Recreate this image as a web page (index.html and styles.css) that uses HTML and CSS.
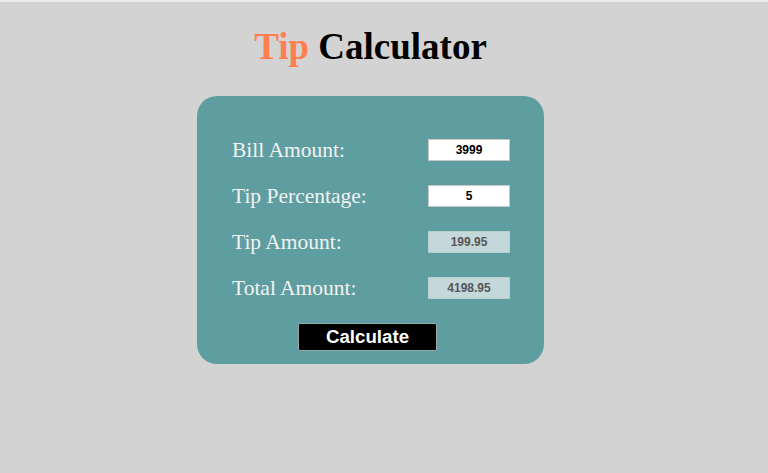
FILE: index.html
```html
<!DOCTYPE html>
<html>
<head>
<meta charset="utf-8">
<link rel="stylesheet" href="styles.css">
</head>
<body>
<div class="page">
  <h1 class="title"><span class="accent">Tip</span> Calculator</h1>
  <div class="card">
    <div class="row">
      <label class="label">Bill Amount:</label>
      <input class="field" type="text" value="3999">
    </div>
    <div class="row">
      <label class="label">Tip Percentage:</label>
      <input class="field" type="text" value="5">
    </div>
    <div class="row">
      <label class="label">Tip Amount:</label>
      <input class="field readonly" type="text" value="199.95" readonly>
    </div>
    <div class="row">
      <label class="label">Total Amount:</label>
      <input class="field readonly" type="text" value="4198.95" readonly>
    </div>
    <div class="actions">
      <button class="btn">Calculate</button>
    </div>
  </div>
</div>
</body>
</html>
```
FILE: styles.css
```css
html, body {
  margin: 0;
  padding: 0;
  height: 100%;
}
body {
  background: #d3d3d3;
  border-top: 2px solid #ebebeb;
  box-sizing: border-box;
  font-family: "Liberation Serif", serif;
}
.page {
  display: flex;
  flex-direction: column;
  align-items: center;
  padding-right: 27px;
}
.title {
  margin: 25px 0 29px 0;
  font-size: 37px;
  line-height: 40px;
  font-weight: bold;
  color: #000;
}
.accent {
  color: #ff7f50;
}
.card {
  width: 347px;
  box-sizing: border-box;
  background: #5f9ea0;
  border-radius: 20px;
  padding: 43px 34px 13px 35px;
  display: flex;
  flex-direction: column;
  gap: 24px;
}
.row {
  display: flex;
  justify-content: space-between;
  align-items: center;
  height: 22px;
}
.label {
  color: #f2f2f2;
  font-size: 21.5px;
  font-family: "Liberation Serif", serif;
}
.field {
  width: 82px;
  height: 22px;
  box-sizing: border-box;
  border: 1px solid #c8c8c8;
  background: #fff;
  text-align: center;
  font-family: "Liberation Sans", Arial, sans-serif;
  font-weight: bold;
  font-size: 12px;
  color: #000;
  padding: 0;
  outline: none;
}
.field.readonly {
  background: #c4d8d9;
  border-color: #b8cfd0;
  color: #555;
}
.actions {
  display: flex;
  justify-content: center;
  padding-right: 7px;
}
.btn {
  width: 139px;
  height: 28px;
  box-sizing: border-box;
  background: #000;
  color: #fff;
  border: 1px solid #9aa;
  border-radius: 2px;
  font-family: "Liberation Sans", Arial, sans-serif;
  font-weight: bold;
  font-size: 18.7px;
  padding: 0;
  cursor: pointer;
}
```
